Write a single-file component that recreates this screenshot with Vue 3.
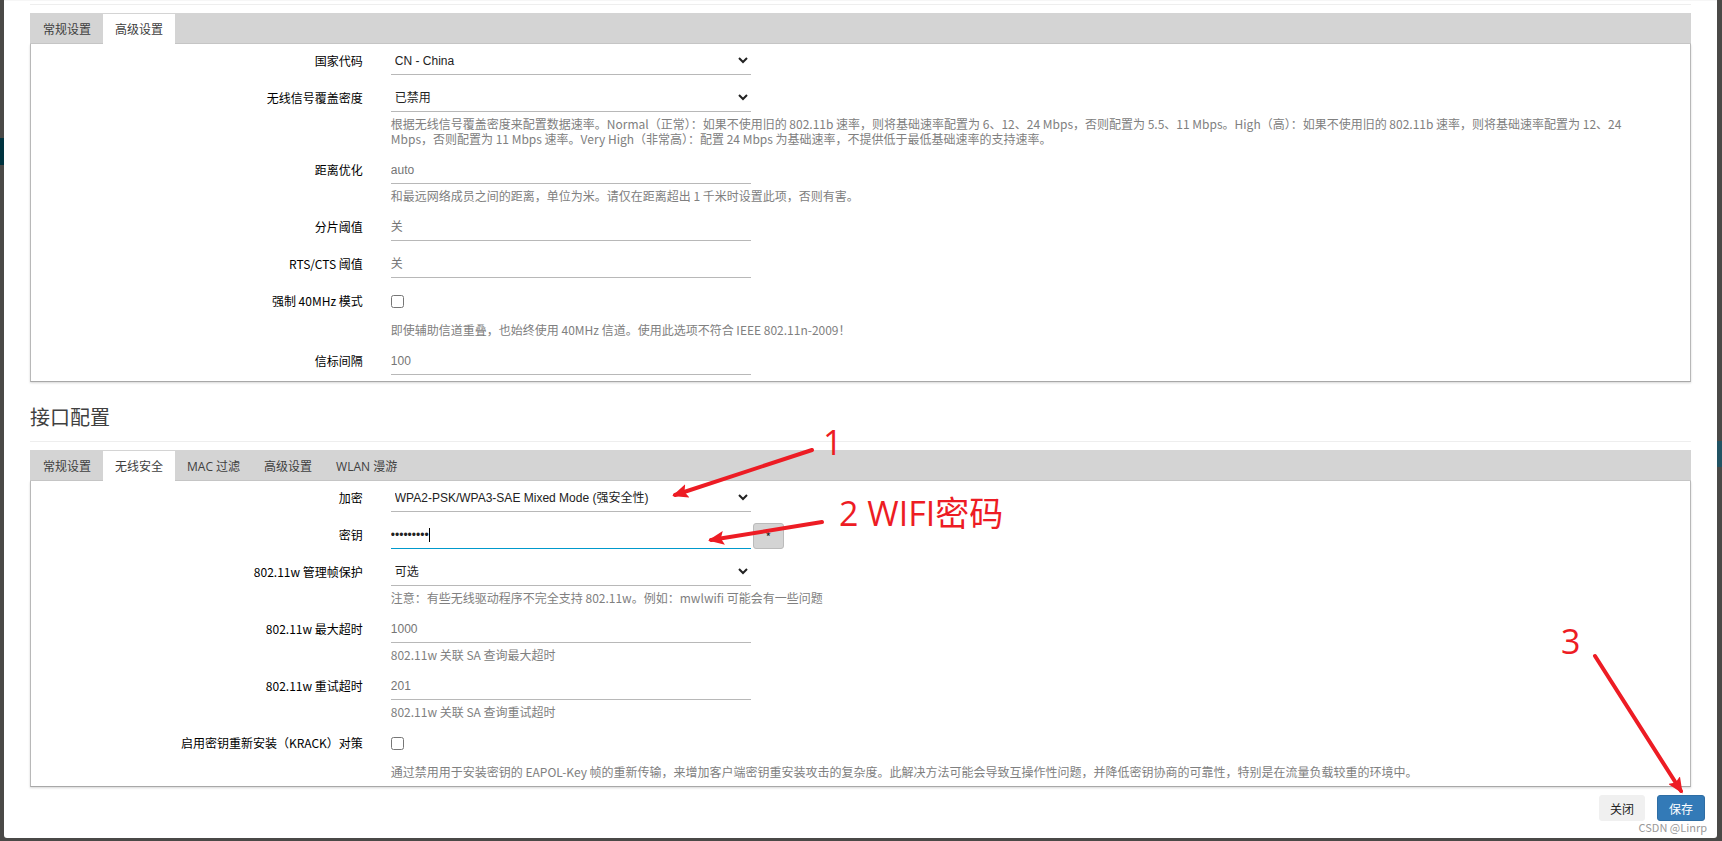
<script setup>
import { ref } from 'vue'

const sections = ref([
  {
    id: 'device',
    title: '',
    active: 1,
    tabs: ['常规设置', '高级设置'],
    fields: [
      { id: 'country', label: '国家代码', type: 'select', value: 'CN - China' },
      {
        id: 'density', label: '无线信号覆盖密度', type: 'select', value: '已禁用',
        help: '根据无线信号覆盖密度来配置数据速率。Normal（正常）：如果不使用旧的 802.11b 速率，则将基础速率配置为 6、12、24 Mbps，否则配置为 5.5、11 Mbps。High（高）：如果不使用旧的 802.11b 速率，则将基础速率配置为 12、24 Mbps，否则配置为 11 Mbps 速率。Very High（非常高）：配置 24 Mbps 为基础速率，不提供低于最低基础速率的支持速率。',
      },
      { id: 'distance', label: '距离优化', type: 'text', hint: 'auto', help: '和最远网络成员之间的距离，单位为米。请仅在距离超出 1 千米时设置此项，否则有害。' },
      { id: 'frag', label: '分片阈值', type: 'text', hint: '关' },
      { id: 'rts', label: 'RTS/CTS 阈值', type: 'text', hint: '关' },
      { id: 'noscan', label: '强制 40MHz 模式', type: 'checkbox', help: '即使辅助信道重叠，也始终使用 40MHz 信道。使用此选项不符合 IEEE 802.11n-2009！' },
      { id: 'beacon', label: '信标间隔', type: 'text', hint: '100' },
    ],
  },
  {
    id: 'iface',
    title: '接口配置',
    active: 1,
    tabs: ['常规设置', '无线安全', 'MAC 过滤', '高级设置', 'WLAN 漫游'],
    fields: [
      { id: 'encryption', label: '加密', type: 'select', value: 'WPA2-PSK/WPA3-SAE Mixed Mode (强安全性)' },
      { id: 'key', label: '密钥', type: 'password', value: '123456789' },
      { id: 'mfp', label: '802.11w 管理帧保护', type: 'select', value: '可选', help: '注意：有些无线驱动程序不完全支持 802.11w。例如：mwlwifi 可能会有一些问题' },
      { id: 'maxto', label: '802.11w 最大超时', type: 'text', hint: '1000', help: '802.11w 关联 SA 查询最大超时' },
      { id: 'retryto', label: '802.11w 重试超时', type: 'text', hint: '201', help: '802.11w 关联 SA 查询重试超时' },
      { id: 'krack', label: '启用密钥重新安装（KRACK）对策', type: 'checkbox', help: '通过禁用用于安装密钥的 EAPOL-Key 帧的重新传输，来增加客户端密钥重安装攻击的复杂度。此解决方法可能会导致互操作性问题，并降低密钥协商的可靠性，特别是在流量负载较重的环境中。' },
    ],
  },
])
const reveal = ref(false)
</script>

<template>
  <div class="backdrop">
    <span class="strip strip-left" aria-hidden="true"></span>
    <span class="strip strip-right" aria-hidden="true"></span>
    <main class="modal">
      <section v-for="s in sections" :key="s.id">
        <h3 class="title" v-if="s.title">{{ s.title }}</h3>
        <hr class="rule" v-else />
        <nav class="tabs">
          <button
            v-for="(t, i) in s.tabs" :key="t" type="button"
            class="tab" :class="{ active: i === s.active }" @click="s.active = i"
          >{{ t }}</button>
        </nav>
        <div class="panel">
          <div class="row" v-for="f in s.fields" :key="f.id">
            <label class="label" :for="f.id">{{ f.label }}</label>
            <div class="field">
              <select v-if="f.type === 'select'" :id="f.id" class="control">
                <option>{{ f.value }}</option>
              </select>
              <div v-else-if="f.type === 'checkbox'" class="check">
                <input :id="f.id" type="checkbox" />
              </div>
              <div v-else-if="f.type === 'password'" class="secret">
                <input
                  :id="f.id" class="control focused" :type="reveal ? 'text' : 'password'"
                  v-model="f.value" autocomplete="off"
                />
                <span class="caret" aria-hidden="true"></span>
                <button type="button" class="star" @click="reveal = !reveal">*</button>
              </div>
              <input v-else :id="f.id" class="control" type="text" :placeholder="f.hint" />
              <p v-if="f.help" class="help">{{ f.help }}</p>
            </div>
          </div>
        </div>
      </section>
      <footer class="actions">
        <button type="button" class="btn">关闭</button>
        <button type="button" class="btn primary">保存</button>
      </footer>
    </main>
    <svg class="notes">
      <defs>
        <marker id="head" viewBox="0 0 16 14" refX="13" refY="7" markerWidth="16" markerHeight="14" markerUnits="userSpaceOnUse" orient="auto">
          <path d="M16 7 L0 0 L3 7 L0 14 Z" />
        </marker>
      </defs>
      <path class="arrow" d="M812 450 L675 495" />
      <path class="arrow" d="M822 522 L711 540" />
      <path class="arrow" d="M1595 656 L1681 791" />
      <text x="823" y="455">1</text>
      <text x="839" y="526">2 WIFI密码</text>
      <text x="1561" y="654">3</text>
    </svg>
    <span class="credit">CSDN @Linrp</span>
  </div>
</template>

<style>
body {
  margin: 0;
  background: #4a4947;
}
</style>

<style scoped>
.backdrop {
  position: relative;
  box-sizing: border-box;
  min-height: 100vh;
  padding: 0 5px 3px 4px;
  overflow: hidden;
  background: #4a4947;
  font-family: "Noto Sans CJK SC", sans-serif;
  font-size: 12px;
  color: #404040;
}
.strip {
  position: absolute;
  width: 5px;
}
.strip-left {
  left: 0;
  top: 138px;
  height: 27px;
  background: #00333f;
}
.strip-right {
  right: 0;
  top: 441px;
  height: 26px;
  background: #225363;
}
.modal {
  position: relative;
  box-sizing: border-box;
  min-height: calc(100vh - 3px);
  padding: 4px 26px 0;
  border-radius: 0 0 3px 3px;
  background: #fff;
  box-shadow: inset 0 1px 0 #f6f6f6;
}
.rule {
  height: 1px;
  margin: 0 0 8px;
  border: 0;
  background: #eee;
}
.title {
  margin: 23px 0 8px;
  padding-bottom: 12px;
  border-bottom: 1px solid #eee;
  font-size: 20px;
  line-height: 24px;
  font-weight: 400;
}
.tabs {
  display: flex;
  height: 30px;
  padding: 0 1px;
  border-bottom: 1px solid #c8c8c8;
  background: #d4d4d4;
}
.tab {
  height: 30px;
  margin-top: 1px;
  padding: 0 12px 1px;
  border: 0;
  background: transparent;
  font-family: "Open Sans", "Noto Sans CJK SC", sans-serif;
  font-size: 12px;
  color: #404040;
}
.tab.active {
  background: #fff;
}
.panel {
  padding: 1px 0 6px;
  border: 1px solid #b8b8b8;
  border-top: 0;
  border-bottom-color: #a8a8a8;
  box-shadow: 0 1px 2px rgba(0, 0, 0, 0.16);
}
.row {
  display: grid;
  grid-template-columns: 20% 1fr;
  column-gap: 28px;
}
.row + .row {
  margin-top: 7px;
}
.label {
  padding-top: 2px;
  line-height: 28px;
  text-align: right;
  color: #000;
}
.field {
  padding-right: 32px;
}
.control {
  display: block;
  box-sizing: border-box;
  width: 360px;
  height: 30px;
  margin: 0;
  padding: 2px 0 0;
  border: 0;
  border-bottom: 1px solid #b8b8b8;
  border-radius: 0;
  outline: 0;
  background-color: transparent;
  font: 12px "Liberation Sans", "Noto Sans CJK SC", sans-serif;
  color: #222;
}
.control::placeholder {
  color: #757575;
}
.control.focused {
  border-bottom-color: #0099cc;
  caret-color: transparent;
}
.secret {
  position: relative;
  display: flex;
  align-items: flex-end;
  gap: 2px;
}
.caret {
  position: absolute;
  left: 38px;
  top: 9px;
  width: 1px;
  height: 14px;
  background: #000;
}
.star {
  width: 31px;
  height: 26px;
  padding: 0;
  border: 1px solid #bbb;
  border-radius: 3px;
  background: #d4d4d4;
  font: inherit;
  color: #222;
}
.check {
  display: flex;
  align-items: center;
  height: 33px;
}
.check input {
  width: 13px;
  height: 13px;
  margin: 0;
}
.help {
  margin: 4px 0 1px;
  line-height: 15px;
  color: #808080;
}
.actions {
  display: flex;
  justify-content: flex-end;
  gap: 12px;
  margin: 8px -14px 0 0;
}
.btn {
  height: 26px;
  padding: 0 10px;
  border: 1px solid #f0f0f0;
  border-radius: 3px;
  background: #f0f0f0;
  font: inherit;
  color: #222;
}
.btn.primary {
  padding: 0 11px;
  border-color: #2e6da4;
  background: #337ab7;
  color: #fff;
}
.notes {
  position: absolute;
  left: 0;
  top: 0;
  width: 100%;
  height: 100%;
  pointer-events: none;
  fill: #ed1c24;
}
.notes text {
  font-family: "Open Sans", "Noto Sans CJK SC", sans-serif;
  font-size: 34px;
}
.arrow {
  stroke: #ed1c24;
  stroke-width: 4px;
  stroke-linecap: round;
  marker-end: url(#head);
}
.credit {
  position: absolute;
  right: 15px;
  bottom: 6px;
  font-size: 11px;
  line-height: 16px;
  color: #999;
}
</style>
